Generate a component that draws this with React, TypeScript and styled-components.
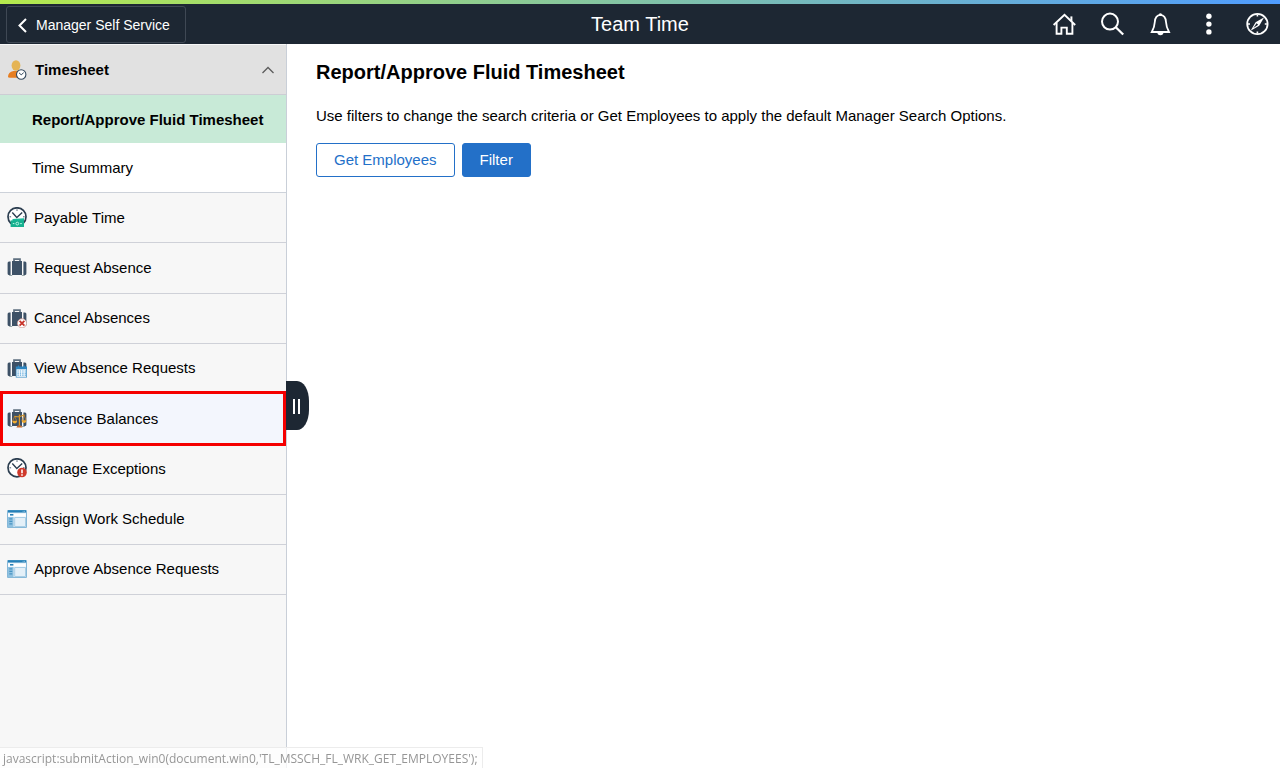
import React from "react";
import styled, { createGlobalStyle, css } from "styled-components";

const GlobalStyle = createGlobalStyle`
  *, *::before, *::after { box-sizing: border-box; }
  body {
    margin: 0;
    background: #fff;
    color: #000;
    font-family: "Liberation Sans", Arial, sans-serif;
    font-size: 15px;
  }
  button { font-family: inherit; cursor: pointer; }
`;

const Page = styled.div`
  display: flex;
  flex-direction: column;
  min-height: 100vh;
`;

const GradientStrip = styled.div`
  height: 4px;
  background: linear-gradient(90deg, #b5ea4d, #4f9cff);
`;

const Header = styled.header`
  display: grid;
  grid-template-columns: 1fr auto 1fr;
  align-items: center;
  height: 40px;
  padding: 0 12px 0 6px;
  background: #1d2733;
  color: #fff;
`;

const BackButton = styled.button`
  justify-self: start;
  display: flex;
  align-items: center;
  gap: 7px;
  height: 37px;
  padding: 1px 15px 0 10px;
  border: 1px solid #3f4854;
  border-radius: 3px;
  background: transparent;
  color: #fff;
  font-size: 14px;
`;

const PageTitle = styled.h1`
  margin: 0;
  padding-left: 6px;
  font-size: 20px;
  font-weight: 400;
  line-height: 24px;
`;

const HeaderActions = styled.div`
  justify-self: end;
  display: flex;
  gap: 24px;
`;

const IconButton = styled.button`
  display: flex;
  padding: 0;
  border: 0;
  background: none;
  color: #fff;

  svg { overflow: visible; }
`;

const Body = styled.div`
  flex: 1;
  display: flex;
`;

const Sidebar = styled.nav`
  position: relative;
  flex: none;
  width: 287px;
  padding-top: 1px;
  border-right: 1px solid #c9cfd8;
  background: #f7f7f7;
`;

const GroupHeader = styled.button`
  display: flex;
  align-items: center;
  gap: 8px;
  width: 100%;
  height: 50px;
  padding: 0 12px 0 7px;
  border: 0;
  border-bottom: 1px solid #cdcdd4;
  background: #e1e1e1;
  color: #000;
  font-size: 15px;
  font-weight: 700;
`;

const GroupLabel = styled.span`
  flex: 1;
  text-align: left;
`;

const SubList = styled.ul`
  margin: 0;
  padding: 0;
  list-style: none;
  border-bottom: 1px solid #cdd2da;
  background: #fff;
`;

const SubLink = styled.a<{ $selected?: boolean }>`
  display: flex;
  align-items: center;
  height: 49px;
  padding-left: 32px;
  color: #000;
  text-decoration: none;
  ${(p) => p.$selected && css`
    height: 48px;
    background: #c8ead7;
    font-weight: 700;
  `}
`;

const MenuList = styled.ul`
  display: grid;
  grid-auto-rows: 1fr;
  min-height: 402px;
  margin: 0;
  padding: 0;
  list-style: none;
`;

const MenuItem = styled.li<{ $marked?: boolean }>`
  position: relative;
  display: grid;
  border-bottom: 1px solid #cfd1d8;
  ${(p) => p.$marked && css`
    background: #f3f6fd;
    &::after {
      content: "";
      position: absolute;
      inset: -3px 0;
      border: 3px solid #f50000;
      pointer-events: none;
    }
  `}
`;

const MenuLink = styled.a`
  display: flex;
  align-items: center;
  gap: 7px;
  padding: 0 0 1px 7px;
  color: #000;
  text-decoration: none;
`;

const CollapseHandle = styled.button`
  position: absolute;
  top: 337px;
  left: 100%;
  display: flex;
  align-items: center;
  gap: 3px;
  width: 23px;
  height: 49px;
  padding: 1px 0 0 7px;
  border: 0;
  border-radius: 0 12px 12px 0 / 0 20px 20px 0;
  background: #1d2733;
`;

const HandleBar = styled.span`
  width: 2px;
  height: 15px;
  background: #fff;
`;

const Content = styled.main`
  flex: 1;
  padding: 16px 29px;
`;

const Heading = styled.h2`
  margin: 0 0 20px;
  font-size: 20px;
  font-weight: 700;
  line-height: 24px;
`;

const Hint = styled.p`
  margin: 0 0 15px;
  line-height: 24px;
`;

const ButtonRow = styled.div`
  display: flex;
  gap: 7px;
`;

const ActionButton = styled.button<{ $primary?: boolean }>`
  height: 34px;
  padding: 0 17px 1px;
  border: 1px solid #2370c8;
  border-radius: 3px;
  background: ${(p) => (p.$primary ? "#2370c8" : "#fff")};
  color: ${(p) => (p.$primary ? "#fff" : "#2370c8")};
  font-size: 15px;
`;

const LinkStatus = styled.div`
  position: fixed;
  left: 0;
  bottom: 0;
  height: 21px;
  padding: 0 4px 0 3px;
  border: solid #ececec;
  border-width: 1px 1px 0 0;
  background: rgba(255, 255, 255, 0.75);
  color: #969696;
  font-family: "Open Sans", "Noto Sans", sans-serif;
  font-size: 12px;
  line-height: 22px;
  white-space: nowrap;
`;

const Chevron = () => (
  <svg width="12" height="16" viewBox="0 0 12 16" fill="none" stroke="#fff" strokeWidth="2" aria-hidden="true">
    <path d="M9 2 L2.5 8.5 L9 15" />
  </svg>
);

const CollapseIcon = () => (
  <svg width="12" height="8" viewBox="0 0 12 8" fill="none" stroke="#5c5c5c" strokeWidth="1.3" aria-hidden="true">
    <path d="M0.5 7 L6 1.5 L11.5 7" />
  </svg>
);

const HomeIcon = () => (
  <svg width="24" height="24" viewBox="0 0 24 24" fill="none" stroke="currentColor" strokeWidth="1.9" aria-hidden="true">
    <path d="M1.6 13 L12.5 2.8 L23.2 13" />
    <path d="M4.6 10.8 V21.8 H9.4 V15.6 H14.8 V21.8 H20.4 V10.8" />
    <path d="M19.4 9 V4.4" strokeWidth="2" />
  </svg>
);

const SearchIcon = () => (
  <svg width="24" height="24" viewBox="0 0 24 24" fill="none" stroke="currentColor" strokeWidth="2" aria-hidden="true">
    <circle cx="10" cy="9.6" r="8" />
    <path d="M15.8 15.3 L23.2 22.5" strokeWidth="2.3" />
  </svg>
);

const BellIcon = () => (
  <svg width="24" height="24" viewBox="0 0 24 24" fill="none" stroke="currentColor" strokeWidth="1.8" aria-hidden="true">
    <path d="M12.4 2.9 C8.2 3.2 7 6.5 6.8 10 C6.6 14 6 16 3.8 20 H21 C18.8 16 18.2 14 18 10 C17.8 6.5 16.6 3.2 12.4 2.9 Z" />
    <path d="M10.6 3.2 a1.8 2 0 0 1 3.6 0 Z M9.4 20.6 h6 a3 2.6 0 0 1 -6 0 Z" fill="currentColor" stroke="none" />
  </svg>
);

const DotsIcon = () => (
  <svg width="24" height="24" viewBox="0 0 24 24" fill="currentColor" aria-hidden="true">
    <circle cx="12.9" cy="4.3" r="2.7" />
    <circle cx="12.9" cy="12.1" r="2.7" />
    <circle cx="12.9" cy="19.9" r="2.7" />
  </svg>
);

const CompassIcon = () => (
  <svg width="24" height="24" viewBox="0 0 24 24" fill="none" stroke="currentColor" aria-hidden="true">
    <circle cx="13.4" cy="12" r="10.2" strokeWidth="1.8" />
    <path d="M13.4 2.5 V4.6 M13.4 19.4 V21.5 M3.9 12 H6 M20.8 12 H22.9" strokeWidth="1.6" />
    <path d="M20.2 5.2 L15.2 13.8 L6.6 18.8 L11.6 10.2 Z" fill="currentColor" stroke="none" />
    <path d="M9.4 16 L14.2 12.8 L12.6 11.2 Z" fill="#1d2733" stroke="none" />
  </svg>
);

const Drawing = ({ children }: { children: React.ReactNode }) => (
  <svg width="20" height="20" viewBox="0 0 20 20" aria-hidden="true">{children}</svg>
);

const TimesheetIcon = () => (
  <Drawing>
    <path d="M1 17 Q1 11.8 6.5 11 H11 Q14 11.5 15 14 V17.8 H3 Q1 17.8 1 17Z" fill="#e67e22" />
    <ellipse cx="9" cy="5.5" rx="4.4" ry="5.2" fill="#e5b454" />
    <circle cx="14.2" cy="14.5" r="4.7" fill="#fff" stroke="#34495e" strokeWidth="1.1" />
    <path d="M12 12.8 L14.2 14.8 L16.7 12.7" fill="none" stroke="#34495e" />
  </Drawing>
);

const ClockFace = () => (
  <>
    <circle cx="10" cy="9.8" r="9" fill="#fff" stroke="#2c3e50" strokeWidth="1.7" />
    <path d="M5.3 5.6 L9.8 10.4 L15.2 5.4" fill="none" stroke="#2c3e50" strokeWidth="1.4" />
    <path d="M10 2.3 v1.6 M2.5 9.8 h1.6 M16 9.8 h1.6" stroke="#34495e" strokeWidth=".9" />
  </>
);

const PayableIcon = () => (
  <Drawing>
    <ClockFace />
    <path d="M5.5 12 L17 11.2 V14 H5.5z" fill="#1abc9c" />
    <path d="M3.6 13.4 h13.4 v6.6 h-13.4z" fill="#17b08f" />
    <circle cx="10.3" cy="16.6" r="1.4" fill="none" stroke="#d8fff4" strokeWidth=".8" />
    <path d="M5.8 16.6 h1.6 M13.2 16.6 h1.6" stroke="#d8fff4" strokeWidth=".9" />
  </Drawing>
);

const Briefcase = () => (
  <>
    <path d="M2.2 18 h3 v1 h-3z M14.8 18 h3 v1 h-3z" fill="#95a5a6" />
    <path d="M7 4.5 V2.2 H13 V4.5" fill="none" stroke="#5f7080" strokeWidth="1.7" />
    <path d="M2 4.5 H3.6 V18 H2 Q.6 18 .6 16.5 V6 Q.6 4.5 2 4.5Z M16.4 4.5 H18 Q19.4 4.5 19.4 6 V16.5 Q19.4 18 18 18 H16.4Z M5 4 H15 V18 H5Z" fill="#3d5166" />
  </>
);

const BriefcaseIcon = () => (
  <Drawing><Briefcase /></Drawing>
);

const CancelIcon = () => (
  <Drawing>
    <Briefcase />
    <circle cx="15" cy="15.3" r="4.6" fill="#fff" stroke="#c99a95" strokeWidth=".8" />
    <path d="M12.6 12.9 L17.4 17.7 M17.4 12.9 L12.6 17.7" stroke="#c8342a" strokeWidth="1.8" />
  </Drawing>
);

const CalendarIcon = () => (
  <Drawing>
    <Briefcase />
    <path d="M8.8 8.5 H20 V19.5 H8.8Z" fill="#2e86c1" />
    <path d="M9.5 11.3 H19.3 V18.8 H9.5Z" fill="#fff" />
    <path d="M11.5 7.5 V9.5 M17.2 7.5 V9.5" stroke="#2e86c1" strokeWidth="1.2" />
    <path d="M10.4 13 h8.6 M10.4 15.1 h8.6 M10.4 17.2 h8.6" stroke="#58a7dc" strokeWidth="1.2" strokeDasharray="1.4 1" />
  </Drawing>
);

const BalanceIcon = () => (
  <Drawing>
    <Briefcase />
    <path d="M7.4 8.4 Q12 9.6 17.4 6.8 M12.4 6.6 V18.2" fill="none" stroke="#d99a2b" strokeWidth="1.2" />
    <path d="M7.6 8.5 L5.6 13 H9.8 Z M17 7 L15 12.4 H19 Z" fill="none" stroke="#c9862b" strokeWidth=".7" />
    <path d="M5.2 13 h5 q-.5 2.6 -2.5 2.6 q-2 0 -2.5 -2.6z M14.5 12.4 h5 q-.5 2.6 -2.5 2.6 q-2 0 -2.5 -2.6z" fill="#efac32" />
    <path d="M9.4 19.6 Q9.8 17.3 12.4 17.3 Q15 17.3 15.4 19.6Z" fill="#c66a2b" />
  </Drawing>
);

const ExceptionIcon = () => (
  <Drawing>
    <ClockFace />
    <circle cx="15" cy="14.5" r="4.8" fill="#d0392b" />
    <path d="M15 11.4 V15.2 M15 16.2 V17.8" stroke="#fff" strokeWidth="1.6" />
  </Drawing>
);

const WindowIcon = () => (
  <Drawing>
    <path d="M.5 1.5 H19.5 V18.5 H.5Z" fill="#eef6fb" stroke="#86b8d8" />
    <path d="M1 1.2 H19 V3.6 H1Z" fill="#2580b8" />
    <path d="M1.5 5 H18.5 V7.4 H1.5Z" fill="#fff" />
    <path d="M3 5 h3.4 v1.6 h-3.4z" fill="#2580b8" />
    <path d="M1 8 H6.6 V18 H1Z" fill="#8fc1e0" />
    <path d="M2.3 9.8 h3 M2.3 12.3 h3 M2.3 14.8 h3" stroke="#4794c2" strokeWidth="1.2" />
    <path d="M7.7 8.5 H18.5 V17.5 H7.7Z" fill="#e4f0f8" stroke="#98c4e0" strokeWidth=".8" />
    <path d="M15.7 2.4 h2.4" stroke="#aed5ee" strokeWidth=".8" strokeDasharray=".8 .5" />
  </Drawing>
);

const menu = [
  { label: "Payable Time", Icon: PayableIcon },
  { label: "Request Absence", Icon: BriefcaseIcon },
  { label: "Cancel Absences", Icon: CancelIcon },
  { label: "View Absence Requests", Icon: CalendarIcon },
  { label: "Absence Balances", Icon: BalanceIcon, marked: true },
  { label: "Manage Exceptions", Icon: ExceptionIcon },
  { label: "Assign Work Schedule", Icon: WindowIcon },
  { label: "Approve Absence Requests", Icon: WindowIcon },
];

const actions = [
  { label: "Home", Icon: HomeIcon },
  { label: "Search", Icon: SearchIcon },
  { label: "Notifications", Icon: BellIcon },
  { label: "Actions", Icon: DotsIcon },
  { label: "NavBar", Icon: CompassIcon },
];

export default function App() {
  return (
    <Page>
      <GlobalStyle />
      <GradientStrip />
      <Header>
        <BackButton type="button">
          <Chevron />
          Manager Self Service
        </BackButton>
        <PageTitle>Team Time</PageTitle>
        <HeaderActions>
          {actions.map(({ label, Icon }) => (
            <IconButton key={label} type="button" aria-label={label}>
              <Icon />
            </IconButton>
          ))}
        </HeaderActions>
      </Header>
      <Body>
        <Sidebar>
          <GroupHeader type="button" aria-expanded="true">
            <TimesheetIcon />
            <GroupLabel>Timesheet</GroupLabel>
            <CollapseIcon />
          </GroupHeader>
          <SubList>
            <li>
              <SubLink href="#report" $selected aria-current="page">Report/Approve Fluid Timesheet</SubLink>
            </li>
            <li>
              <SubLink href="#summary">Time Summary</SubLink>
            </li>
          </SubList>
          <MenuList>
            {menu.map(({ label, Icon, marked }) => (
              <MenuItem key={label} $marked={marked}>
                <MenuLink href="#menu">
                  <Icon />
                  {label}
                </MenuLink>
              </MenuItem>
            ))}
          </MenuList>
          <CollapseHandle type="button" aria-label="Collapse navigation">
            <HandleBar />
            <HandleBar />
          </CollapseHandle>
        </Sidebar>
        <Content>
          <Heading>Report/Approve Fluid Timesheet</Heading>
          <Hint>
            Use filters to change the search criteria or Get Employees to apply the default Manager Search Options.
          </Hint>
          <ButtonRow>
            <ActionButton type="button">Get Employees</ActionButton>
            <ActionButton type="button" $primary>Filter</ActionButton>
          </ButtonRow>
        </Content>
      </Body>
      <LinkStatus>javascript:submitAction_win0(document.win0,'TL_MSSCH_FL_WRK_GET_EMPLOYEES');</LinkStatus>
    </Page>
  );
}
